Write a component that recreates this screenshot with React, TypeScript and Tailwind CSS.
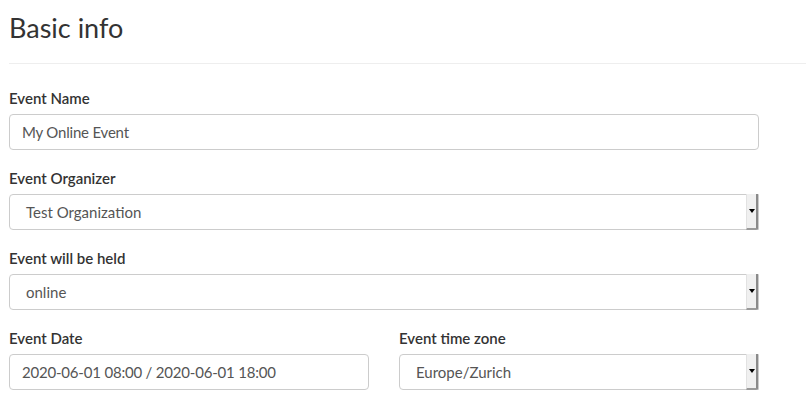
const font = { fontFamily: 'Lato, "Noto Sans", sans-serif' };

function Label({ children }: { children: React.ReactNode }) {
  return <label className="block h-[21px] mb-[5px] text-[15px] leading-[21px] font-semibold text-[#333]">{children}</label>;
}

function TextInput({ value }: { value: string }) {
  return (
    <div className="flex items-center h-[36px] px-[12px] border border-[#ccc] rounded-[4px] bg-white text-[15px] text-[#555] tracking-[-0.2px]">
      {value}
    </div>
  );
}

function Select({ value }: { value: string }) {
  return (
    <div className="flex h-[36px] border border-[#ccc] rounded-l-[4px] bg-white text-[15px] text-[#555]">
      <div className="flex-1 flex items-center pl-[16px]">{value}</div>
      <div className="w-[12px] -mt-px -mb-px flex items-center justify-center bg-[#f0f0f0] border-l border-[#e2e2e2] border-r-2 border-r-[#8a8a8a] border-b-2 border-b-[#9a9a9a] rounded-br-[2px]">
        <span className="block w-0 h-0 border-l-[3px] border-r-[3px] border-t-[4px] border-l-transparent border-r-transparent border-t-black" />
      </div>
    </div>
  );
}

export default function App() {
  return (
    <div className="bg-white w-[806px] h-[414px] overflow-hidden" style={font}>
      <div className="pl-[9px] pt-[10px]">
        <h1 className="text-[27px] leading-[36px] font-normal text-[#333]">Basic info</h1>
      </div>
      <div className="ml-[9px] mt-[17px] border-t border-[#eee]" />
      <div className="pl-[9px] pt-[24px] w-[759px]">
        <div className="mb-[18px]">
          <Label>Event Name</Label>
          <TextInput value="My Online Event" />
        </div>
        <div className="mb-[18px]">
          <Label>Event Organizer</Label>
          <Select value="Test Organization" />
        </div>
        <div className="mb-[18px]">
          <Label>Event will be held</Label>
          <Select value="online" />
        </div>
        <div className="grid grid-cols-2 gap-[30px]">
          <div>
            <Label>Event Date</Label>
            <TextInput value="2020-06-01 08:00 / 2020-06-01 18:00" />
          </div>
          <div>
            <Label>Event time zone</Label>
            <Select value="Europe/Zurich" />
          </div>
        </div>
      </div>
    </div>
  );
}
